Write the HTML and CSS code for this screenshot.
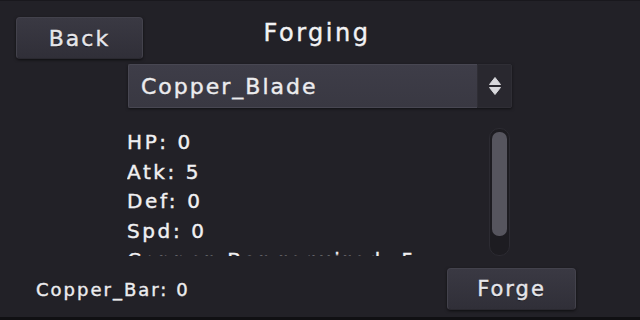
FILE: index.html
```html
<!DOCTYPE html>
<html>
<head>
<meta charset="utf-8">
<link rel="stylesheet" href="styles.css">
</head>
<body>
<div class="app">
  <div class="header">
    <button class="btn btn-back">Back</button>
    <div class="title">Forging</div>
    <div></div>
  </div>
  <div class="select">
    <div class="select-main">Copper_Blade</div>
    <div class="select-arrow">
      <svg width="14" height="20" viewBox="0 0 14 20">
        <path d="M7 1.5 L12.5 8.5 L1.5 8.5 Z" fill="#d8d8dc" stroke="#d8d8dc" stroke-width="1" stroke-linejoin="round"/>
        <path d="M1.5 11.5 L12.5 11.5 L7 18.5 Z" fill="#d8d8dc" stroke="#d8d8dc" stroke-width="1" stroke-linejoin="round"/>
      </svg>
    </div>
  </div>
  <div class="content">
    <div class="stats">
      <div class="stat">HP: 0</div>
      <div class="stat">Atk: 5</div>
      <div class="stat">Def: 0</div>
      <div class="stat">Spd: 0</div>
      <div class="stat">Copper_Bar required: 5</div>
    </div>
    <div class="scrollbar"><div class="thumb"></div></div>
  </div>
  <div class="footer">
    <div class="material">Copper_Bar: 0</div>
    <button class="btn btn-forge">Forge</button>
  </div>
</div>
</body>
</html>
```

FILE: styles.css
```css
* { box-sizing: border-box; }
html, body { margin: 0; padding: 0; background: #222127; }
body {
  font-family: "DejaVu Sans", "Noto Sans", sans-serif;
  color: #ececee;
  -webkit-text-stroke: 0.4px currentColor;
}
.app {
  width: 640px;
  height: 320px;
  background: #222127;
  border-top: 1px solid #19181d;
  border-bottom: 3px solid #101013;
  overflow: hidden;
}
.header {
  display: grid;
  grid-template-columns: 1fr auto 1fr;
  align-items: start;
  padding-top: 16px;
}
.btn {
  font-family: inherit;
  color: #e6e6ea;
  -webkit-text-stroke: 0.4px #e6e6ea;
  background: linear-gradient(#3a3943, #302f38);
  border: 1px solid #43424c;
  border-bottom-color: #2a2930;
  border-radius: 4px;
  box-shadow: 0 1px 3px rgba(0,0,0,0.6);
  display: flex;
  align-items: center;
  justify-content: center;
  padding: 0;
  letter-spacing: 2px;
  text-shadow: 0 1px 1px rgba(0,0,0,0.5);
}
.btn-back {
  justify-self: start;
  margin-left: 16px;
  width: 127px;
  height: 42px;
  font-size: 22px;
}
.title {
  font-size: 24px;
  line-height: 28px;
  margin-top: 2px;
  margin-left: -6px;
  letter-spacing: 2.5px;
  color: #f2f2f4;
}
.select {
  display: flex;
  margin: 5px 0 0 128px;
  width: 384px;
  height: 44px;
  box-shadow: 0 1px 3px rgba(0,0,0,0.5);
  border-radius: 2px;
}
.select-main {
  flex: 1;
  background: linear-gradient(#3e3d48, #393842);
  border: 1px solid #484752;
  border-right: none;
  border-radius: 2px 0 0 2px;
  display: flex;
  align-items: center;
  padding-left: 12px;
  font-size: 22px;
  letter-spacing: 2px;
  color: #ececee;
}
.select-arrow {
  width: 35px;
  background: #29282f;
  border: 1px solid #2f2e35;
  border-radius: 0 2px 2px 0;
  display: flex;
  align-items: center;
  justify-content: center;
}
.content {
  display: flex;
  margin-top: 20px;
  height: 128px;
}
.stats {
  margin-left: 127px;
  width: 361px;
  height: 128px;
  overflow: hidden;
}
.stat {
  font-size: 20px;
  line-height: 29.6px;
  letter-spacing: 2.6px;
  white-space: nowrap;
  color: #f0f0f2;
}
.scrollbar {
  width: 21px;
  height: 128px;
  margin-left: 1px;
  background: #1d1c21;
  border: 1px solid #2c2b32;
  border-radius: 10px;
  padding: 3px 2px 0 2px;
}
.thumb {
  height: 104px;
  background: #56555e;
  border-radius: 7px;
}
.footer {
  display: flex;
  align-items: center;
  margin-top: 12px;
  padding-left: 36px;
}
.material {
  font-size: 18px;
  letter-spacing: 2px;
  color: #ececee;
}
.btn-forge {
  margin-left: auto;
  margin-right: 64px;
  width: 129px;
  height: 42px;
  font-size: 21px;
}
```
